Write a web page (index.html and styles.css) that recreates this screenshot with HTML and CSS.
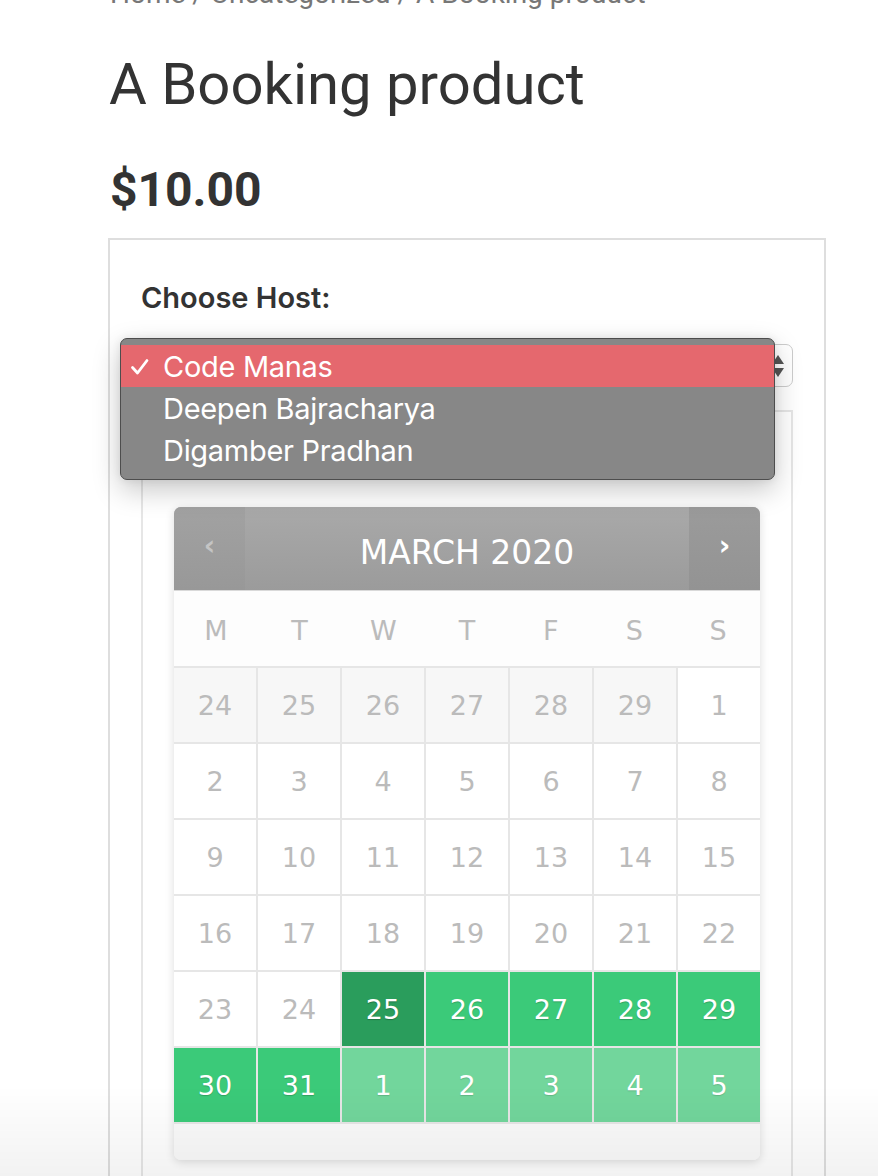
FILE: index.html
```html
<!DOCTYPE html>
<html>
<head>
<meta charset="utf-8">
<link rel="stylesheet" href="styles.css">
</head>
<body>
<div class="page">
  <nav class="breadcrumb">Home / Uncategorized / A Booking product</nav>
  <h1 class="title">A Booking product</h1>
  <p class="price">$10.00</p>
  <div class="box">
    <label class="label">Choose Host:</label>
    <div class="select-wrap">
      <div class="select">
        <span class="select-text">Code Manas</span>
        <svg class="select-arrows" width="14" height="26" viewBox="0 0 14 26"><path d="M7 2 L13 11 L1 11 Z" fill="#555"/><path d="M7 24 L13 15 L1 15 Z" fill="#555"/></svg>
      </div>
      <ul class="popup">
        <li class="opt sel"><span class="check"><svg width="20" height="18" viewBox="0 0 20 18"><path d="M2.5 9.5 L7.5 15 L17 2.5" fill="none" stroke="#fff" stroke-width="2.8" stroke-linecap="round" stroke-linejoin="round"/></svg></span>Code Manas</li>
        <li class="opt"><span class="check"></span>Deepen Bajracharya</li>
        <li class="opt"><span class="check"></span>Digamber Pradhan</li>
      </ul>
    </div>
    <div class="inner">
      <div class="cal">
        <div class="cal-head">
          <div class="nav prev">‹</div>
          <div class="month">MARCH 2020</div>
          <div class="nav next">›</div>
        </div>
        <div class="dow">
          <span>M</span><span>T</span><span>W</span><span>T</span><span>F</span><span>S</span><span>S</span>
        </div>
        <div class="days">
          <span class="d prev-m">24</span><span class="d prev-m">25</span><span class="d prev-m">26</span><span class="d prev-m">27</span><span class="d prev-m">28</span><span class="d prev-m">29</span><span class="d">1</span>
          <span class="d">2</span><span class="d">3</span><span class="d">4</span><span class="d">5</span><span class="d">6</span><span class="d">7</span><span class="d">8</span>
          <span class="d">9</span><span class="d">10</span><span class="d">11</span><span class="d">12</span><span class="d">13</span><span class="d">14</span><span class="d">15</span>
          <span class="d">16</span><span class="d">17</span><span class="d">18</span><span class="d">19</span><span class="d">20</span><span class="d">21</span><span class="d">22</span>
          <span class="d">23</span><span class="d">24</span><span class="d today">25</span><span class="d avail">26</span><span class="d avail">27</span><span class="d avail">28</span><span class="d avail">29</span>
          <span class="d avail">30</span><span class="d avail">31</span><span class="d next-m">1</span><span class="d next-m">2</span><span class="d next-m">3</span><span class="d next-m">4</span><span class="d next-m">5</span>
        </div>
        <div class="cal-foot"></div>
      </div>
    </div>
  </div>
</div>
<div class="fade"></div>
</body>
</html>
```
FILE: styles.css
```css
html, body {
  margin: 0;
  padding: 0;
  background: #fff;
  overflow: hidden;
}
body {
  font-family: Roboto, "Liberation Sans", sans-serif;
  color: #333;
}
.page {
  padding-left: 108px;
  width: 718px;
}
.breadcrumb {
  margin-top: -22px;
  padding-left: 2px;
  font-size: 28px;
  line-height: 32px;
  color: #777;
  white-space: nowrap;
}
.title {
  margin: 34px 0 0 0;
  padding-left: 1px;
  font-size: 58px;
  font-weight: 400;
  line-height: 80px;
  color: #333;
}
.price {
  margin: 38px 0 0 0;
  padding-left: 2px;
  font-size: 48px;
  font-weight: 700;
  line-height: 56px;
  color: #333;
}
.box {
  margin-top: 20px;
  border: 2px solid #dedede;
  border-bottom: none;
  padding: 40px 31px 0 31px;
  height: 1000px;
}
.label {
  display: block;
  font-family: Inter, Roboto, sans-serif;
  font-size: 29px;
  font-weight: 600;
  line-height: 36px;
  color: #333;
}
.select-wrap {
  position: relative;
  margin-top: 28px;
}
.select {
  height: 43px;
  border: 1px solid #ccc;
  border-radius: 7px;
  box-sizing: border-box;
  display: flex;
  align-items: center;
  justify-content: space-between;
  padding: 0 7px 0 20px;
  font-family: Inter, sans-serif;
  font-size: 26px;
  color: #333;
}
.select-text {
  visibility: hidden;
}
.select-arrows {
  display: block;
}
.popup {
  position: absolute;
  left: -21px;
  top: -6px;
  width: 655px;
  margin: 0;
  padding: 6px 0 8px 0;
  list-style: none;
  background: #878787;
  border: 1px solid #4d4d4d;
  border-radius: 7px;
  box-sizing: border-box;
  box-shadow: 0 10px 28px rgba(0, 0, 0, 0.22), 0 0 8px rgba(0, 0, 0, 0.08);
  font-family: Inter, sans-serif;
  font-size: 29px;
  color: #fff;
  z-index: 5;
}
.opt {
  height: 42px;
  display: flex;
  align-items: center;
  letter-spacing: -0.3px;
}
.opt.sel {
  background: #e5686e;
}
.check {
  width: 42px;
  padding-left: 9px;
  box-sizing: border-box;
  display: flex;
  align-items: center;
  padding-top: 2px;
}
.check svg {
  display: block;
}
.inner {
  margin-top: 23px;
  border: 2px solid #e6e6e6;
  border-bottom: none;
  padding: 95px 31px 0 31px;
  height: 900px;
}
.cal {
  border-radius: 7px;
  overflow: hidden;
  box-shadow: 0 2px 10px rgba(0, 0, 0, 0.14);
  font-family: "DejaVu Sans", Verdana, sans-serif;
}
.cal-head {
  height: 83px;
  display: flex;
  background: linear-gradient(#a9a9a9, #9b9b9b);
  border-bottom: 1px solid #d9d9d9;
}
.nav {
  width: 71px;
  display: flex;
  align-items: center;
  justify-content: center;
  font-size: 28px;
  font-weight: 700;
  padding-bottom: 6px;
  box-sizing: border-box;
}
.prev {
  background: linear-gradient(#a2a2a2, #989898);
  color: #c4c4c4;
}
.next {
  background: linear-gradient(#9b9b9b, #939393);
  color: #fff;
}
.month {
  flex: 1;
  display: flex;
  align-items: center;
  justify-content: center;
  color: #fff;
  font-size: 33px;
  padding-top: 8px;
  box-sizing: border-box;
}
.dow {
  height: 75px;
  display: grid;
  grid-template-columns: repeat(7, 1fr);
  background: #fdfdfd;
  border-bottom: 2px solid #e6e6e6;
}
.dow span {
  display: flex;
  align-items: center;
  justify-content: center;
  color: #bbb;
  font-size: 27px;
  padding-top: 4px;
}
.days {
  display: grid;
  grid-template-columns: repeat(7, 1fr);
  grid-auto-rows: 74px;
  gap: 2px;
  background: #e6e6e6;
  border-bottom: 2px solid #e6e6e6;
}
.d {
  display: flex;
  align-items: center;
  justify-content: center;
  background: #fff;
  color: #bbb;
  font-size: 27px;
}
.d.prev-m {
  background: #f7f7f7;
}
.d.today {
  background: #2a9d5c;
  color: #fff;
  text-shadow: 0 1px 1px rgba(0, 0, 0, 0.25);
}
.d.avail {
  background: #3bca79;
  color: #fff;
  text-shadow: 0 1px 1px rgba(0, 0, 0, 0.2);
}
.d.next-m {
  background: #72d69c;
  color: #fff;
  text-shadow: 0 1px 1px rgba(0, 0, 0, 0.15);
}
.cal-foot {
  height: 36px;
  background: #fafafa;
}
.fade {
  position: fixed;
  left: 0;
  right: 0;
  bottom: 0;
  height: 90px;
  background: linear-gradient(rgba(0, 0, 0, 0), rgba(0, 0, 0, 0.05));
  pointer-events: none;
  z-index: 10;
}
```
